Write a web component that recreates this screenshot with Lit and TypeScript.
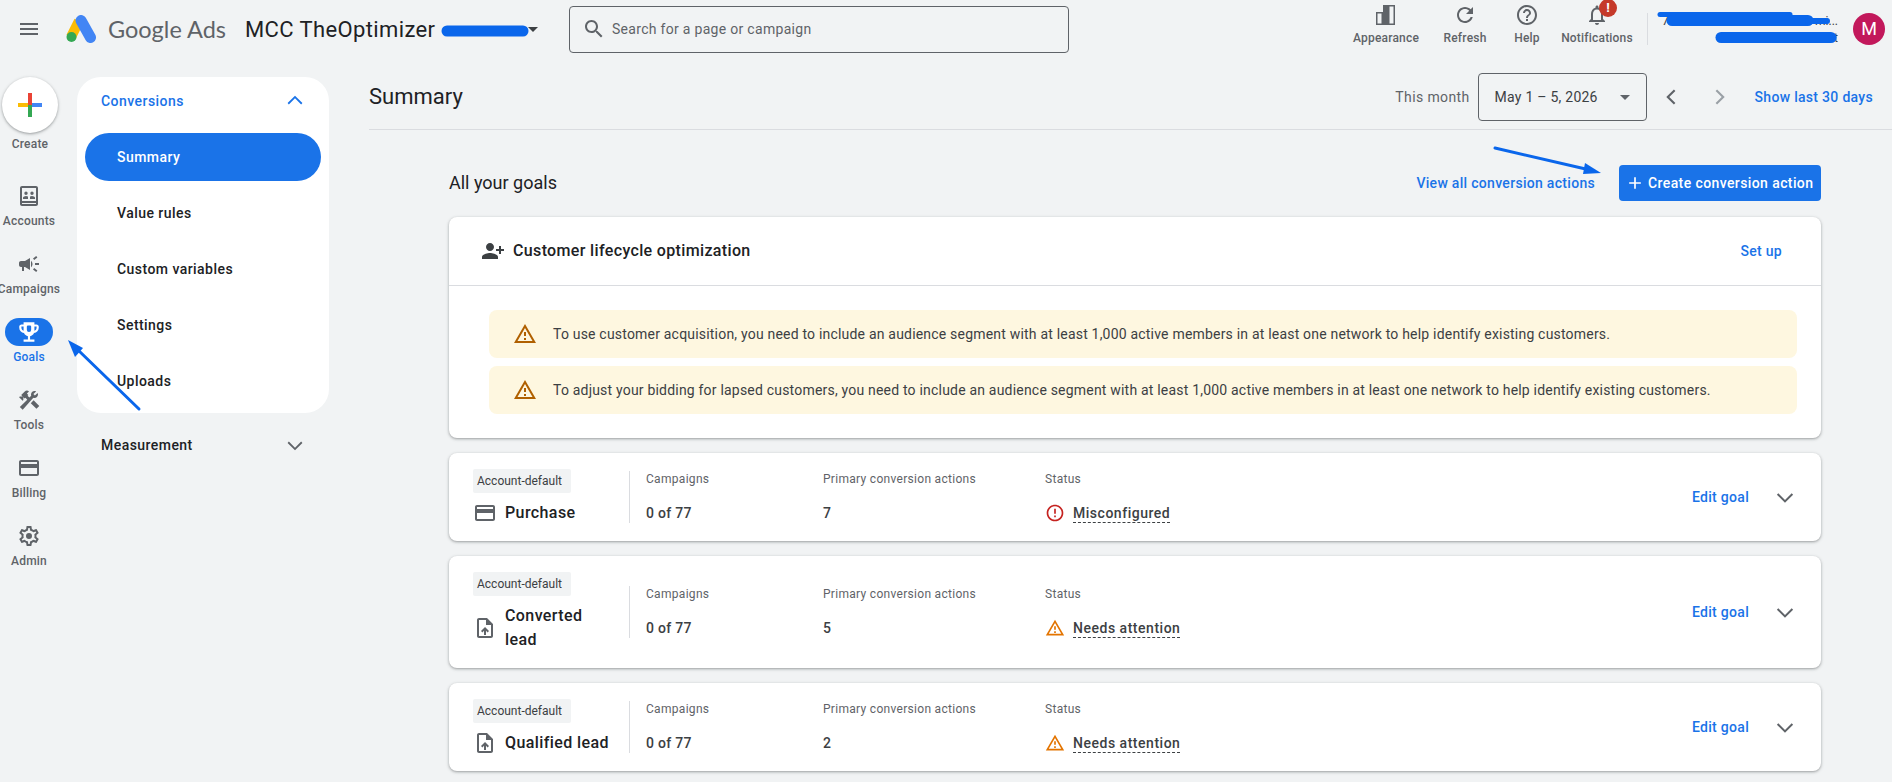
import { LitElement, html, css, svg } from "lit";
import { customElement } from "lit/decorators.js";

const P: Record<string, string> = {
  menu: "M3 18h18v-2H3v2zm0-5h18v-2H3v2zm0-7v2h18V6H3z",
  search: "M15.5 14h-.79l-.28-.27C15.41 12.59 16 11.11 16 9.5 16 5.91 13.09 3 9.5 3S3 5.91 3 9.5 5.91 16 9.5 16c1.61 0 3.09-.59 4.23-1.57l.27.28v.79l5 4.99L20.49 19l-4.99-5zm-6 0C7.01 14 5 11.99 5 9.5S7.01 5 9.5 5 14 7.01 14 9.5 11.99 14 9.5 14z",
  refresh: "M17.65 6.35C16.2 4.9 14.21 4 12 4c-4.42 0-7.99 3.58-7.99 8s3.57 8 7.99 8c3.73 0 6.84-2.55 7.73-6h-2.08c-.82 2.33-3.04 4-5.65 4-3.31 0-6-2.69-6-6s2.69-6 6-6c1.66 0 3.14.69 4.22 1.78L13 11h7V4l-2.35 2.35z",
  help: "M11 18h2v-2h-2v2zm1-16C6.48 2 2 6.48 2 12s4.48 10 10 10 10-4.48 10-10S17.52 2 12 2zm0 18c-4.41 0-8-3.59-8-8s3.59-8 8-8 8 3.59 8 8-3.59 8-8 8zm0-14c-2.21 0-4 1.79-4 4h2c0-1.1.9-2 2-2s2 .9 2 2c0 2-3 1.75-3 5h2c0-2.25 3-2.5 3-5 0-2.21-1.79-4-4-4z",
  bell: "M12 22c1.1 0 2-.9 2-2h-4c0 1.1.9 2 2 2zm6-6v-5c0-3.07-1.63-5.64-4.5-6.32V4c0-.83-.67-1.5-1.5-1.5s-1.5.67-1.5 1.5v.68C7.64 5.36 6 7.92 6 11v5l-2 2v1h16v-1l-2-2zm-2 1H8v-6c0-2.48 1.51-4.5 4-4.5s4 2.02 4 4.5v6z",
  appearance: "M9 2h12v20H2V9h7V2zM15.500 3.500v17h4v-17zM3.500 10.500v10h4v-10z",
  accounts: "M5 2h14c1.1 0 2 .9 2 2v16c0 1.1-.9 2-2 2H5c-1.1 0-2-.9-2-2V4c0-1.100.9-2 2-2zm0 2v13h14V4H5zm0 15v1h14v-1H5zM9 7.500a1.700 1.700 0 1 1 0 3.400 1.700 1.700 0 0 1 0-3.400zm6 0a1.700 1.700 0 1 1 0 3.400 1.700 1.700 0 0 1 0-3.400zM6 15v-1.300c0-1.100 1.900-1.800 3-1.800.6 0 1.400.2 2 .5V15H6zm7 0v-2.600c.6-.3 1.400-.5 2-.5 1.100 0 3 .7 3 1.800V15h-5z",
  campaign: "M18 11v2h4v-2h-4zm-2 6.610c.96.71 2.210 1.650 3.200 2.390.4-.53.8-1.070 1.200-1.600-.99-.74-2.240-1.680-3.200-2.400-.4.54-.8 1.080-1.200 1.610zM20.400 5.600c-.4-.53-.8-1.070-1.200-1.600-.99.74-2.240 1.680-3.200 2.400.4.53.8 1.070 1.200 1.600.96-.72 2.210-1.650 3.200-2.400zM4 9c-1.100 0-2 .9-2 2v2c0 1.100.9 2 2 2h1v4h2v-4h1l5 3V6L8 9H4zm11.500 3c0-1.330-.58-2.530-1.500-3.350v6.690c.92-.81 1.500-2.010 1.500-3.340z",
  trophy: "M19 5h-2V3H7v2H5c-1.100 0-2 .9-2 2v1c0 2.550 1.920 4.630 4.390 4.940.63 1.500 1.980 2.630 3.610 2.960V19H7v2h10v-2h-4v-3.100c1.630-.33 2.980-1.460 3.610-2.960C19.080 12.630 21 10.550 21 8V7c0-1.100-.9-2-2-2zM5 8V7h2v3.820C5.840 10.400 5 9.300 5 8zm6-2h2a1 1 0 0 1 1 1v3a2 2 0 0 1-4 0V7a1 1 0 0 1 1-1zM19 8c0 1.300-.84 2.400-2 2.820V7h2v1z",
  tools: "M13.780 15.170l2.830-2.830 5.660 5.660-2.830 2.830zM17.500 10c1.930 0 3.500-1.570 3.500-3.500 0-.58-.16-1.120-.41-1.600l-2.700 2.700-1.490-1.490 2.700-2.700c-.48-.25-1.020-.41-1.600-.41-1.930 0-3.500 1.570-3.500 3.500 0 .41.08.8.21 1.160l-1.850 1.850-1.780-1.780.71-.71-1.410-1.410L12 3.490c-1.170-1.170-3.070-1.170-4.240 0L4.220 7.030l1.410 1.410H2.810l-.71.71 3.540 3.540.71-.71V9.150l1.410 1.410.71-.71 1.780 1.780-7.410 7.410 2.830 2.830L16.340 9.790c.36.13.75.21 1.160.21z",
  card: "M20 4H4c-1.110 0-1.990.89-1.990 2L2 18c0 1.110.89 2 2 2h16c1.110 0 2-.89 2-2V6c0-1.110-.89-2-2-2zm0 14H4v-6h16v6zm0-10H4V6h16v2z",
  gear: "M19.430 12.980c.04-.32.07-.64.07-.98 0-.34-.03-.66-.07-.98l2.110-1.650c.19-.15.24-.42.12-.64l-2-3.460c-.09-.16-.26-.25-.44-.25-.06 0-.12.01-.17.03l-2.490 1c-.52-.4-1.080-.73-1.690-.98l-.38-2.650C14.460 2.180 14.250 2 14 2h-4c-.25 0-.46.18-.49.42l-.38 2.650c-.61.25-1.170.59-1.690.98l-2.490-1c-.06-.02-.12-.03-.18-.03-.17 0-.34.09-.43.25l-2 3.460c-.13.22-.07.49.12.64l2.110 1.650c-.04.32-.07.65-.07.98 0 .33.03.66.07.98l-2.110 1.650c-.19.15-.24.42-.12.64l2 3.460c.09.16.26.25.44.25.06 0 .12-.01.17-.03l2.490-1c.52.4 1.080.73 1.690.98l.38 2.650c.03.24.24.42.49.42h4c.25 0 .46-.18.49-.42l.38-2.650c.61-.25 1.170-.59 1.690-.98l2.490 1c.06.02.12.03.18.03.17 0 .34-.09.43-.25l2-3.460c.12-.22.07-.49-.12-.64l-2.110-1.650zm-1.980-1.710c.04.31.05.52.05.73 0 .21-.02.43-.05.73l-.14 1.130.89.7 1.080.84-.7 1.210-1.270-.51-1.040-.42-.9.68c-.43.32-.84.56-1.250.73l-1.060.43-.16 1.130-.2 1.350h-1.400l-.19-1.350-.16-1.130-1.060-.43c-.43-.18-.83-.41-1.230-.71l-.91-.7-1.060.43-1.270.51-.7-1.210 1.080-.84.89-.7-.14-1.130c-.03-.31-.05-.54-.05-.74s.02-.43.05-.73l.14-1.130-.89-.7-1.080-.84.7-1.210 1.270.51 1.040.42.9-.68c.43-.32.84-.56 1.250-.73l1.060-.43.16-1.130.2-1.350h1.390l.19 1.350.16 1.130 1.060.43c.43.18.83.41 1.230.71l.91.7 1.060-.43 1.270-.51.7 1.210-1.070.85-.89.7.14 1.130zM12 9a3 3 0 1 0 0 6 3 3 0 0 0 0-6z",
  personAdd: "M9 12c2.210 0 4-1.790 4-4s-1.790-4-4-4-4 1.790-4 4 1.790 4 4 4zm9-2V7h2v3h3v2h-3v3h-2v-3h-3v-2h3zm-9 4c-2.670 0-8 1.340-8 4v2h16v-2c0-2.660-5.330-4-8-4z",
  warn: "M1 21h22L12 2 1 21zm3.470-2L12 5.990 19.530 19H4.470zM11 16h2v2h-2zm0-6h2v4h-2z",
  error: "M11 15h2v2h-2zm0-8h2v6h-2zm.99-5C6.470 2 2 6.480 2 12s4.470 10 9.990 10C17.520 22 22 17.520 22 12S17.520 2 11.990 2zM12 20c-4.420 0-8-3.580-8-8s3.580-8 8-8 8 3.580 8 8-3.580 8-8 8z",
  upload: "M14 2H6c-1.100 0-1.990.9-1.990 2L4 20c0 1.100.89 2 1.990 2H18c1.100 0 2-.9 2-2V8l-6-6zm4 18H6V4h7v5h5v11zM8 15.010l1.410 1.410L11 14.840V19h2v-4.160l1.590 1.590L16 15.010 12.010 11 8 15.010z",
  down: "M5.300 8.300L12 15l6.700-6.700 1.400 1.400L12 17.800 3.900 9.700z",
  up: "M5.300 15.700L12 9l6.700 6.700 1.400-1.400L12 6.200 3.900 14.300z",
  left: "M16.400 18.100L10.300 12l6.100-6.100L14.900 4.400 7.300 12l7.600 7.600z",
  right: "M7.600 18.100L13.700 12 7.600 5.900 9.100 4.400 16.700 12l-7.600 7.600z",
  caret: "M7 10l5 5 5-5z",
  plus: "M19 13h-6v6h-2v-6H5v-2h6V5h2v6h6v2z",
};

const icon = (n: string, cls = "") =>
  html`<svg class="ic ${cls}" viewBox="0 0 24 24" aria-hidden="true"><path d=${P[n]}></path></svg>`;

const RAIL = [
  { i: "accounts", l: "Accounts" },
  { i: "campaign", l: "Campaigns" },
  { i: "trophy", l: "Goals", on: true },
  { i: "tools", l: "Tools" },
  { i: "card", l: "Billing" },
  { i: "gear", l: "Admin" },
];
const NAV = ["Summary", "Value rules", "Custom variables", "Settings", "Uploads"];
const GOALS = [
  { i: "card", n: "Purchase", c: "7", s: "Misconfigured", e: true },
  { i: "upload", n: "Converted lead", c: "5", s: "Needs attention" },
  { i: "upload", n: "Qualified lead", c: "2", s: "Needs attention" },
];

@customElement("app-root")
export class AppRoot extends LitElement {
  static styles = css`
    :host { display: block; position: relative; width: 1892px; height: 782px; overflow: hidden; background: #f1f3f4; font-family: Roboto, "Liberation Sans", sans-serif; color: #202124; font-size: 14px; }
    * { box-sizing: border-box; }
    .ic { width: 24px; height: 24px; fill: #5f6368; flex: none; display: block; }
    .overlay { position: absolute; left: 0; top: 0; width: 1892px; height: 782px; pointer-events: none; }

    .header { display: flex; align-items: center; height: 58px; }
    .menu { margin-left: 17px; }
    .logo { width: 30px; height: 28px; margin-left: 25px; flex: none; }
    .brand { margin-left: 12px; width: 137px; font-size: 23.5px; color: #5f6368; font-family: Lato, Roboto, sans-serif; white-space: nowrap; }
    .acct { display: flex; align-items: center; width: 324px; font-size: 22px; white-space: nowrap; letter-spacing: .38px; }
    .acct-gap { flex: 1; }
    .acct .ic { width: 24px; height: 24px; margin-right: 24px; fill: #3c4043; }
    .search { display: flex; align-items: center; gap: 6px; width: 500px; height: 47px; border: 1px solid #5f6368; border-radius: 4px; padding-left: 12px; color: #5f6368; letter-spacing: .3px; }
    .actions { margin-left: 272px; display: grid; grid-template-columns: 90px 68px 56px 84px; align-self: flex-start; padding-top: 3px; }
    .action { position: relative; display: flex; flex-direction: column; align-items: center; font-size: 12px; font-weight: 500; line-height: 16px; color: #5f6368; gap: 3px; white-space: nowrap; letter-spacing: .2px; }
    .badge { position: absolute; left: 44px; top: -4px; width: 18px; height: 18px; border-radius: 50%; background: #c5392a; color: #fff; font-size: 13px; font-weight: 700; line-height: 18px; text-align: center; }
    .sep { width: 1px; height: 32px; background: #dadce0; margin-left: 8px; }
    .who { width: 184px; margin-left: 9px; font-size: 12px; line-height: 16px; color: #3c4043; display: flex; flex-direction: column; gap: 1px; }
    .who div { display: flex; justify-content: space-between; padding: 0 3px 0 5px; }
    .avatar { width: 32px; height: 32px; border-radius: 50%; background: #c2185b; color: #fff; margin-left: 12px; font-size: 18px; line-height: 32px; text-align: center; flex: none; }

    .body { display: flex; align-items: flex-start; }
    .rail { width: 58px; flex: none; display: flex; flex-direction: column; align-items: center; padding-top: 19px; gap: 21px; }
    .create { margin-left: 2px; margin-bottom: 9px; display: flex; flex-direction: column; align-items: center; gap: 3px; font-size: 12px; font-weight: 500; line-height: 16px; color: #5f6368; letter-spacing: .2px; }
    .fab { width: 56px; height: 56px; border-radius: 50%; background: #fff; box-shadow: 0 1px 3px 1px rgba(60,64,67,.15), 0 1px 2px rgba(60,64,67,.3); display: flex; align-items: center; justify-content: center; }
    .fab svg { width: 24px; height: 24px; }
    .ritem { display: flex; flex-direction: column; align-items: center; gap: 3px; font-size: 12px; font-weight: 500; line-height: 16px; color: #5f6368; white-space: nowrap; letter-spacing: .2px; width: 48px; }
    .pill { width: 48px; height: 28px; border-radius: 14px; display: flex; align-items: center; justify-content: center; flex: none; }
    .ritem.on { color: #1a73e8; }
    .ritem.on .pill { background: #1a73e8; }
    .ritem.on .ic { fill: #fff; width: 26px; height: 26px; }

    .navcol { width: 252px; margin-left: 19px; padding-top: 19px; flex: none; }
    .panel { background: #fff; border-radius: 24px; padding-bottom: 8px; display: flex; flex-direction: column; gap: 8px; }
    .sect { display: flex; align-items: center; justify-content: space-between; height: 48px; padding: 0 23px 0 24px; font-weight: 500; letter-spacing: .45px; }
    .sect .ic { width: 22px; height: 22px; }
    .sect.open { color: #1a73e8; }
    .sect.open .ic { fill: #1a73e8; }
    .sect.closed { margin-top: 8px; color: #202124; }
    .nitem { display: flex; align-items: center; height: 48px; margin: 0 8px; padding-left: 32px; border-radius: 24px; font-weight: 500; letter-spacing: .45px; }
    .nitem.on { background: #1a73e8; color: #fff; }

    .main { flex: 1; margin-left: 40px; min-width: 0; }
    .sumrow { display: flex; align-items: center; padding: 15px 19px 8px 0; border-bottom: 1px solid #dadce0; }
    .title { font-size: 22px; margin: 0 auto 2px 0; }
    .thismonth { color: #5f6368; letter-spacing: .38px; }
    .datebox { display: flex; align-items: center; justify-content: space-between; width: 169px; height: 48px; margin-left: 8px; padding: 0 9px 0 16px; border: 1px solid #5f6368; border-radius: 4px; color: #3c4043; letter-spacing: .25px; }
    .prev { margin-left: 12px; }
    .next { margin-left: 25px; fill: #9aa0a6; }
    .link { color: #1a73e8; font-weight: 500; letter-spacing: .3px; white-space: nowrap; }
    .last { margin-left: 23px; }

    .content { width: 1372px; margin-left: 80px; padding-top: 35px; display: flex; flex-direction: column; }
    .goalshead { display: flex; align-items: center; height: 36px; margin-bottom: 16px; }
    .goalshead h2 { margin: 0 auto 2px 0; font-size: 18px; font-weight: 400; }
    .cta { display: flex; align-items: center; gap: 3px; width: 202px; height: 36px; margin-left: 24px; padding-left: 6px; background: #1a73e8; color: #fff; border-radius: 4px; font-weight: 500; letter-spacing: .4px; white-space: nowrap; }
    .cta .ic { width: 20px; height: 20px; fill: #fff; }
    .card { background: #fff; border-radius: 8px; box-shadow: 0 1px 2px rgba(60,64,67,.3), 0 1px 3px 1px rgba(60,64,67,.15); margin-bottom: 15px; }
    .chead { display: flex; align-items: center; height: 69px; padding: 0 39px 0 32px; border-bottom: 1px solid #dadce0; gap: 8px; }
    .chead .ic { fill: #3c4043; }
    .chead b { font-size: 16px; font-weight: 500; margin: 0 auto 2px 0; letter-spacing: .35px; }
    .cbody { padding: 24px 24px 24px 40px; display: flex; flex-direction: column; gap: 8px; }
    .alert { display: flex; align-items: center; gap: 16px; height: 48px; padding-left: 24px; background: #fef7e0; border-radius: 8px; color: #3c4043; letter-spacing: .2px; }
    .alert .ic { fill: #b06000; }

    .goal { display: flex; align-items: center; padding: 16px 24px 16px; }
    .gleft { width: 156px; flex: none; display: flex; flex-direction: column; align-items: flex-start; gap: 8px; }
    .chip { height: 24px; width: 98px; padding-left: 4px; background: #f1f3f4; border-radius: 2px; font-size: 12px; line-height: 24px; color: #3c4043; white-space: nowrap; }
    .gname { display: flex; align-items: center; gap: 8px; }
    .gname span { width: 108px; font-size: 16px; font-weight: 500; line-height: 24px; letter-spacing: .4px; }
    .stats { flex: 1; display: grid; grid-template-columns: 177px 222px 1fr; grid-template-rows: 16px 20px; row-gap: 16px; align-items: center; height: 52px; padding-left: 16px; border-left: 1px solid #dadce0; }
    .lab { font-size: 12px; line-height: 16px; color: #5f6368; letter-spacing: .3px; white-space: nowrap; }
    .val { font-weight: 500; color: #3c4043; letter-spacing: .3px; }
    .status { display: flex; align-items: center; gap: 8px; }
    .status .ic { width: 20px; height: 20px; fill: #e37400; }
    .status .ic.err { fill: #c5221f; }
    .status span { border-bottom: 1px dashed #3c4043; padding-top: 2px; line-height: 17px; letter-spacing: .52px; }
    .edit { margin-right: 24px; }
    .goal > .ic { fill: #5f6368; }
  `;

  render() {
    return html`
      <div class="header">
        ${icon("menu", "menu")}
        <svg class="logo" viewBox="0 0 30 28" aria-hidden="true">
          <line x1="13" y1="6" x2="5" y2="22" stroke="#fbbc04" stroke-width="10"></line>
          <circle cx="5.500" cy="22" r="5" fill="#34a853"></circle>
          <line x1="15" y1="5.500" x2="24.500" y2="22.500" stroke="#4285f4" stroke-width="11" stroke-linecap="round"></line>
        </svg>
        <div class="brand">Google Ads</div>
        <div class="acct">MCC TheOptimizer<span class="acct-gap"></span>${icon("caret")}</div>
        <div class="search">${icon("search")}Search for a page or campaign</div>
        <div class="actions">
          <div class="action">${icon("appearance")}Appearance</div>
          <div class="action">${icon("refresh")}Refresh</div>
          <div class="action">${icon("help")}Help</div>
          <div class="action">${icon("bell")}Notifications<span class="badge">!</span></div>
        </div>
        <div class="sep"></div>
        <div class="who"><div><span>7</span><span>mi...</span></div><div><span></span><span>t</span></div></div>
        <div class="avatar">M</div>
      </div>
      <div class="body">
        <div class="rail">
          <div class="create">
            <div class="fab">
              <svg viewBox="0 0 24 24" aria-hidden="true">
                <rect x="0" y="10" width="12" height="4" fill="#fbbc04"></rect>
                <rect x="12" y="10" width="12" height="4" fill="#4285f4"></rect>
                <rect x="10" y="12" width="4" height="12" fill="#34a853"></rect>
                <rect x="10" y="0" width="4" height="12" fill="#ea4335"></rect>
              </svg>
            </div>
            Create
          </div>
          ${RAIL.map((r) => html`<div class="ritem ${r.on ? "on" : ""}"><div class="pill">${icon(r.i)}</div>${r.l}</div>`)}
        </div>
        <div class="navcol">
          <div class="panel">
            <div class="sect open">Conversions${icon("up")}</div>
            ${NAV.map((n, i) => html`<div class="nitem ${i === 0 ? "on" : ""}">${n}</div>`)}
          </div>
          <div class="sect closed">Measurement${icon("down")}</div>
        </div>
        <div class="main">
          <div class="sumrow">
            <div class="title">Summary</div>
            <div class="thismonth">This month</div>
            <div class="datebox">May 1 – 5, 2026${icon("caret")}</div>
            ${icon("left", "prev")}
            ${icon("right", "next")}
            <div class="link last">Show last 30 days</div>
          </div>
          <div class="content">
            <div class="goalshead">
              <h2>All your goals</h2>
              <div class="link">View all conversion actions</div>
              <div class="cta">${icon("plus")}Create conversion action</div>
            </div>
            <div class="card">
              <div class="chead">${icon("personAdd")}<b>Customer lifecycle optimization</b><div class="link">Set up</div></div>
              <div class="cbody">
                <div class="alert">${icon("warn")}To use customer acquisition, you need to include an audience segment with at least 1,000 active members in at least one network to help identify existing customers.</div>
                <div class="alert">${icon("warn")}To adjust your bidding for lapsed customers, you need to include an audience segment with at least 1,000 active members in at least one network to help identify existing customers.</div>
              </div>
            </div>
            ${GOALS.map(
              (g) => html`<div class="card goal">
                <div class="gleft">
                  <div class="chip">Account-default</div>
                  <div class="gname">${icon(g.i)}<span>${g.n}</span></div>
                </div>
                <div class="stats">
                  <div class="lab">Campaigns</div>
                  <div class="lab">Primary conversion actions</div>
                  <div class="lab">Status</div>
                  <div class="val">0 of 77</div>
                  <div class="val">${g.c}</div>
                  <div class="val status">${icon(g.e ? "error" : "warn", g.e ? "err" : "")}<span>${g.s}</span></div>
                </div>
                <div class="link edit">Edit goal</div>
                ${icon("down")}
              </div>`
            )}
          </div>
        </div>
      </div>
      <svg class="overlay" viewBox="0 0 1892 782" aria-hidden="true">
        ${svg`
          <g fill="none" stroke="#0a66eb" stroke-linecap="round" stroke-linejoin="round">
            <path d="M447 31 H523" stroke-width="11"></path>
            <path d="M1660 14.500 H1790" stroke-width="5"></path>
            <path d="M1672 20.500 H1808" stroke-width="11"></path>
            <path d="M1808 21 H1827" stroke-width="6"></path>
            <path d="M1721 37.500 H1831" stroke-width="11"></path>
            <path d="M1495 148 L1590 170" stroke-width="3"></path>
            <path d="M139 409 L78 350" stroke-width="3"></path>
          </g>
          <polygon points="1601,173 1585,163 1583,174" fill="#0a66eb"></polygon>
          <polygon points="68,340 83,348 75,357" fill="#0a66eb"></polygon>
        `}
      </svg>
    `;
  }
}
